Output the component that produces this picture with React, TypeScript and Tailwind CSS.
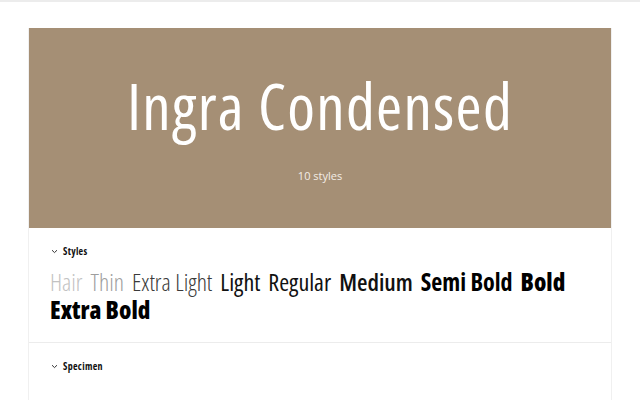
const styles = [
  { name: 'Hair', cls: 'font-light text-[#c2c2c2]' },
  { name: 'Thin', cls: 'font-light text-[#9e9e9e]' },
  { name: 'Extra Light', cls: 'font-light text-[#3a3a3a]' },
  { name: 'Light', cls: 'font-normal text-[#111]' },
  { name: 'Regular', cls: 'font-medium text-[#111]' },
  { name: 'Medium', cls: 'font-semibold text-[#111]' },
  { name: 'Semi Bold', cls: 'font-bold text-black' },
  { name: 'Bold', cls: 'font-extrabold text-black' },
  { name: 'Extra Bold', cls: 'font-extrabold text-black' },
];

function Chevron() {
  return (
    <svg width="7" height="5" viewBox="0 0 7 5" className="text-[#333]">
      <path d="M1 1.2 L3.5 3.6 L6 1.2" fill="none" stroke="currentColor" strokeWidth="1" />
    </svg>
  );
}

function SectionLabel({ label }: { label: string }) {
  return (
    <div className="flex items-center gap-[5px] pl-[1px] text-[10px] font-bold text-[#111] [font-stretch:75%] tracking-[0.3px]">
      <Chevron />
      <span>{label}</span>
    </div>
  );
}

export default function App() {
  return (
    <div className="min-h-screen bg-white border-t-2 border-[#ececec] font-['Open_Sans',sans-serif]">
      <div className="mx-[28px] mt-[26px] border border-[#f0f0f0] border-t-0">
        <header className="h-[200px] bg-[#a58f75] flex flex-col items-center text-white">
          <h1 className="mt-[40px] text-[63px] leading-[76px] font-normal [font-stretch:75%] tracking-[1.3px]">
            Ingra Condensed
          </h1>
          <p className="mt-[24px] text-[11px] text-[#f3ede6]">10 styles</p>
        </header>

        <section className="px-[21px] pt-[16px] pb-[18px] border-b border-[#ececec]">
          <SectionLabel label="Styles" />
          <div className="mt-[9px] text-[24px] leading-[28px] [font-stretch:75%] flex flex-wrap gap-x-[8px]">
            {styles.map((s) => (
              <span key={s.name} className={s.cls}>
                {s.name}
              </span>
            ))}
          </div>
        </section>

        <section className="px-[21px] pt-[16px] pb-[30px]">
          <SectionLabel label="Specimen" />
        </section>
      </div>
    </div>
  );
}
